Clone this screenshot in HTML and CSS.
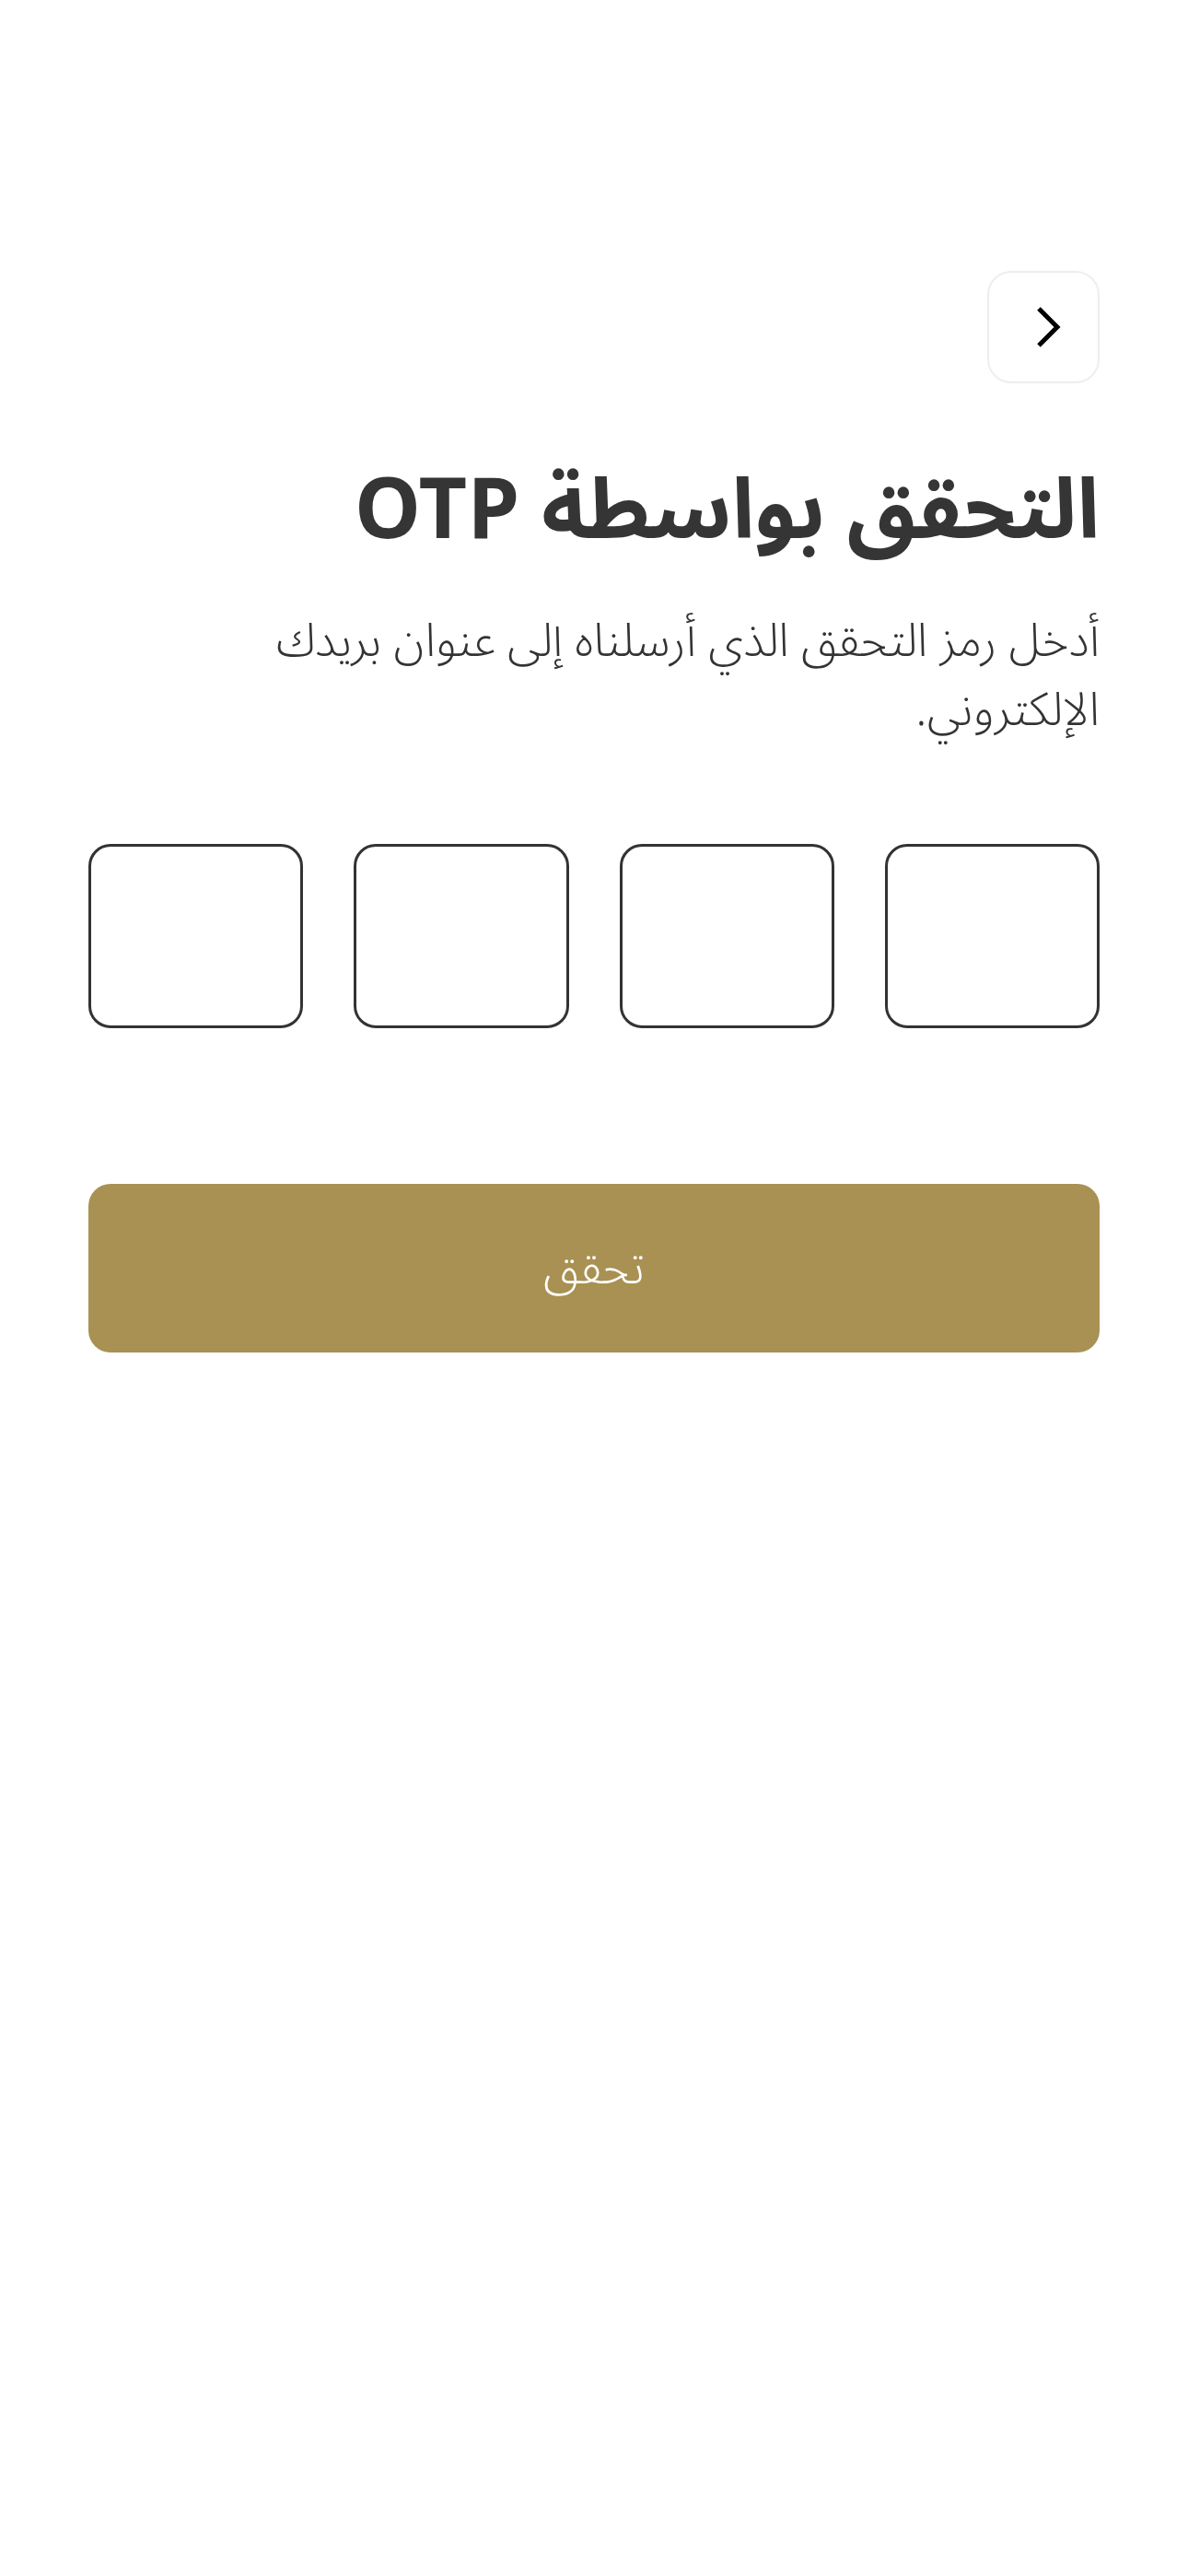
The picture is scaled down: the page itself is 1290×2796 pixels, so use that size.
FILE: index.html
```html
<!DOCTYPE html>
<html lang="ar" dir="rtl">
<head>
<meta charset="utf-8">
<title>التحقق بواسطة OTP</title>
<link rel="stylesheet" href="styles.css">
</head>
<body>
<main class="page">
  <div class="topbar">
    <button class="back-btn" aria-label="رجوع">
      <svg width="122" height="122" viewBox="0 0 122 122" aria-hidden="true">
        <polyline points="56,41 76,61 56,81" fill="none" stroke="#000" stroke-width="5" stroke-linecap="butt" stroke-linejoin="miter"/>
      </svg>
    </button>
  </div>

  <h1 class="title">التحقق بواسطة OTP</h1>
  <p class="subtitle">أدخل رمز التحقق الذي أرسلناه إلى عنوان بريدك الإلكتروني.</p>

  <div class="otp">
    <input class="otp-box" type="text" maxlength="1" inputmode="numeric">
    <input class="otp-box" type="text" maxlength="1" inputmode="numeric">
    <input class="otp-box" type="text" maxlength="1" inputmode="numeric">
    <input class="otp-box" type="text" maxlength="1" inputmode="numeric">
  </div>

  <button class="verify-btn">تحقق</button>
</main>
</body>
</html>
```

FILE: styles.css
```css
* {
  box-sizing: border-box;
}

html, body {
  margin: 0;
  padding: 0;
  background: #ffffff;
}

body {
  font-family: "Noto Sans Arabic", "DejaVu Sans", "Noto Sans", sans-serif;
  color: #333333;
}

.page {
  padding: 294px 96px 0;
  display: flex;
  flex-direction: column;
}

.topbar {
  display: flex;
  justify-content: flex-start;
}

.back-btn {
  width: 122px;
  height: 122px;
  padding: 0;
  border: 2px solid #eeeeee;
  border-radius: 26px;
  background: #ffffff;
  display: flex;
  align-items: center;
  justify-content: center;
  overflow: hidden;
}

.back-btn svg {
  display: block;
  flex: none;
}

.title {
  margin: 84px 0 0;
  font-size: 91px;
  line-height: 110px;
  font-weight: 700;
  color: #353535;
}

.subtitle {
  margin: 49px 0 0;
  font-size: 50px;
  line-height: 75px;
  font-weight: 300;
  color: #333333;
}

.otp {
  margin-top: 107px;
  display: grid;
  grid-template-columns: repeat(4, 1fr);
  gap: 55px;
}

.otp-box {
  height: 200px;
  width: 100%;
  border: 3px solid #333333;
  border-radius: 24px;
  background: #ffffff;
  font-size: 60px;
  text-align: center;
  outline: none;
  font-family: inherit;
}

.verify-btn {
  margin-top: 169px;
  height: 183px;
  width: 100%;
  border: none;
  border-radius: 24px;
  background: #a89153;
  color: #ffffff;
  font-family: inherit;
  font-size: 50px;
  font-weight: 300;
}
```
